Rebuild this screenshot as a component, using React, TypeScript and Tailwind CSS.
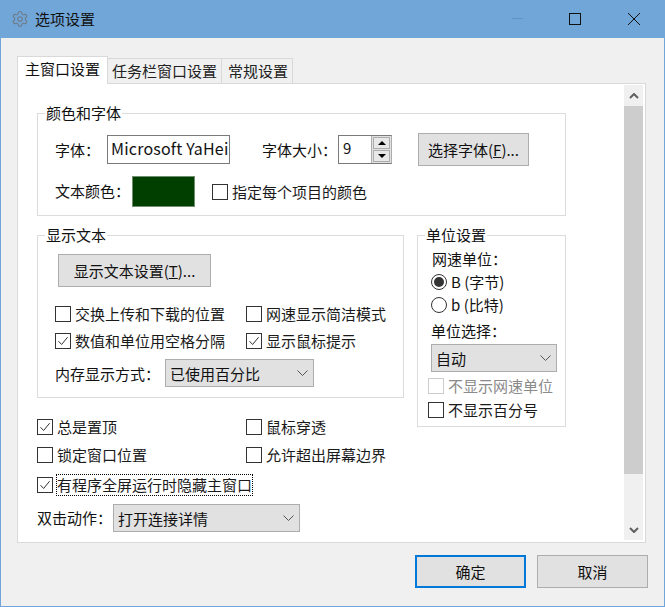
import React from 'react';
import { Settings } from 'lucide-react';

const FONT = 'font-["Noto_Sans_CJK_SC","Noto_Sans",sans-serif]';

function Check({ label, checked, disabled, focus, className = '' }: { label: string; checked?: boolean; disabled?: boolean; focus?: boolean; className?: string }) {
  return (
    <div className={`flex items-center h-[20px] ${className}`}>
      <span className={`w-[16px] h-[16px] shrink-0 border bg-white flex items-center justify-center ${disabled ? 'border-[#cccccc]' : 'border-[#333333]'}`}>
        {checked && (
          <svg width="12" height="12" viewBox="0 0 12 12" fill="none">
            <path d="M1.5 6.2 4.6 9.5 10.6 2.2" stroke="#333333" strokeWidth="1" />
          </svg>
        )}
      </span>
      <span className={`ml-[4px] text-[15px] leading-[20px] whitespace-nowrap ${disabled ? 'text-[#8a8a8a]' : 'text-[#1a1a1a]'} ${focus ? 'outline-1 outline-dotted outline-black' : ''}`}>{label}</span>
    </div>
  );
}

function Radio({ label, checked }: { label: string; checked?: boolean }) {
  return (
    <div className="flex items-center h-[23px]">
      <span className="w-[16px] h-[16px] rounded-full border border-[#333333] flex items-center justify-center">
        {checked && <span className="w-[10px] h-[10px] rounded-full bg-[#333333]" />}
      </span>
      <span className="ml-[4px] text-[15px] leading-[20px]">{label}</span>
    </div>
  );
}

function Combo({ value, className = '' }: { value: string; className?: string }) {
  return (
    <div className={`h-[28px] flex items-center justify-between pl-[4px] pr-[5px] bg-[#e1e1e1] border border-[#adadad] text-[15px] ${className}`}>
      <span className="pt-[2px]">{value}</span>
      <svg width="11" height="6" viewBox="0 0 11 6" fill="none"><path d="M.5.5l5 5 5-5" stroke="#555555" /></svg>
    </div>
  );
}

function Button({ children, className = '' }: { children: React.ReactNode; className?: string }) {
  return (
    <div className={`flex items-center justify-center pt-[2px] bg-[#e1e1e1] text-[15px] ${className}`}>
      {children}
    </div>
  );
}

function Group({ title, className = '', children }: { title: string; className?: string; children: React.ReactNode }) {
  return (
    <fieldset className={`border border-[#dcdcdc] min-w-0 ${className}`}>
      <legend className="ml-[7px] px-px text-[15px] leading-[20px]">{title}</legend>
      {children}
    </fieldset>
  );
}

export default function App() {
  return (
    <div className={`w-[665px] h-[607px] bg-[#f0f0f0] border border-t-0 border-[#70a6d8] text-[#111111] flex flex-col ${FONT}`}>
      {/* 标题栏 */}
      <div className="h-[38px] -mx-px bg-[#70a6d8] flex items-center shrink-0">
        <Settings size={18} strokeWidth={1.5} color="#6f7c8a" className="ml-[11px]" />
        <span className="ml-[6px] text-[15px]">选项设置</span>
        <div className="ml-auto flex items-center">
          <svg width="14" height="14" viewBox="0 0 14 14" className="mr-[43px]"><path d="M1 6.5h11" stroke="#5f94c4" /></svg>
          <svg width="14" height="14" viewBox="0 0 14 14" className="mr-[45px]"><rect x="1.5" y="1.5" width="11" height="11" fill="none" stroke="#111111" /></svg>
          <svg width="14" height="14" viewBox="0 0 14 14" className="mr-[24px]"><path d="M1 1 13 13M13 1 1 13" stroke="#111111" /></svg>
        </div>
      </div>

      {/* 标签页 */}
      <div className="mt-[18px] ml-[16px] flex items-end h-[27px] relative z-10 text-[15px]">
        <div className="h-[28px] -mb-px w-[91px] pb-[2px] bg-white border border-b-0 border-[#d9d9d9] flex items-center justify-center">主窗口设置</div>
        <div className="h-[25px] w-[114px] border border-l-0 border-b-0 border-[#d9d9d9] flex items-center justify-center text-[#222222]">任务栏窗口设置</div>
        <div className="h-[25px] w-[71px] pl-[2px] border border-l-0 border-b-0 border-[#d9d9d9] flex items-center justify-center text-[#222222]">常规设置</div>
      </div>

      {/* 面板 */}
      <div className="ml-[16px] w-[629px] h-[460px] bg-white border border-[#d9d9d9] flex p-[1px]">
        <div className="flex-1 pl-[18px] pt-[18px]">
          <Group title="颜色和字体" className="w-[529px] h-[113px]">
            <div className="flex items-center h-[29px] mt-[12px] ml-[17px]">
              <span className="w-[52px] pt-[2px] text-[15px]">字体：</span>
              <div className="w-[123px] h-[29px] border border-[#7a7a7a] flex items-center pl-[3px] pb-[4px] text-[16px] tracking-[0.2px]">Microsoft YaHei</div>
              <span className="ml-[32px] w-[76px] pt-[2px] text-[15px]">字体大小：</span>
              <div className="w-[54px] h-[29px] flex border border-[#7a7a7a] border-r-[#adadad]">
                <span className="w-[32px] pl-[4px] text-[15px] leading-[24px]">9</span>
                <div className="flex-1 flex flex-col justify-center gap-[1px] bg-[#e1e1e1] border-l border-[#adadad] px-px">
                  <div className="h-[12px] bg-[#e8e8e8] border border-[#adadad] flex items-center justify-center">
                    <span className="w-0 h-0 border-x-[4px] border-x-transparent border-b-[4px] border-b-black" />
                  </div>
                  <div className="h-[12px] bg-[#e8e8e8] border border-[#adadad] flex items-center justify-center">
                    <span className="w-0 h-0 border-x-[4px] border-x-transparent border-t-[4px] border-t-black" />
                  </div>
                </div>
              </div>
              <Button className="ml-[26px] w-[111px] h-[33px] border border-[#adadad]">选择字体(<u>F</u>)...</Button>
            </div>
            <div className="flex items-center h-[31px] mt-[12px] ml-[17px]">
              <span className="w-[77px] text-[15px]">文本颜色：</span>
              <div className="w-[63px] h-[31px] bg-[#003f00] border border-[#6f8f6f]" />
              <Check label="指定每个项目的颜色" className="ml-[17px]" />
            </div>
          </Group>

          <div className="flex mt-[9px]">
            <div className="w-[367px]">
              <Group title="显示文本" className="h-[173px]">
                <Button className="ml-[20px] mt-[9px] w-[153px] h-[33px] border border-[#adadad]">显示文本设置(<u>T</u>)...</Button>
                <div className="ml-[17px] mt-[17px] grid grid-cols-[191px_1fr] gap-y-[7px]">
                  <Check label="交换上传和下载的位置" />
                  <Check label="网速显示简洁模式" />
                  <Check label="数值和单位用空格分隔" checked />
                  <Check label="显示鼠标提示" checked />
                </div>
                <div className="ml-[17px] mt-[8px] flex items-center text-[15px]">
                  <span className="w-[110px] pt-[2px]">内存显示方式：</span>
                  <Combo value="已使用百分比" className="w-[149px]" />
                </div>
              </Group>
              <div className="mt-[19px] grid grid-cols-[209px_1fr] gap-y-[8px]">
                <Check label="总是置顶" checked />
                <Check label="鼠标穿透" />
                <Check label="锁定窗口位置" />
                <Check label="允许超出屏幕边界" />
              </div>
              <Check label="有程序全屏运行时隐藏主窗口" checked focus className="mt-[10px]" />
              <div className="mt-[9px] flex items-center text-[15px]">
                <span className="w-[76px]">双击动作：</span>
                <Combo value="打开连接详情" className="w-[187px]" />
              </div>
            </div>
            <div className="ml-[13px] w-[149px]">
              <Group title="单位设置" className="h-[202px]">
                <div className="pl-[10px]">
                  <div className="ml-[4px] mt-[4px] text-[15px] leading-[20px]">网速单位：</div>
                  <div className="ml-[3px] mt-[1px]">
                    <Radio label="B (字节)" checked />
                    <Radio label="b (比特)" />
                  </div>
                  <div className="ml-[3px] mt-[5px] text-[15px] leading-[20px]">单位选择：</div>
                  <Combo value="自动" className="ml-[3px] mt-[3px] w-[126px]" />
                  <Check label="不显示网速单位" disabled className="mt-[4px]" />
                  <Check label="不显示百分号" className="mt-[4px]" />
                </div>
              </Group>
            </div>
          </div>
        </div>

        {/* 滚动条 */}
        <div className="w-[19px] flex flex-col bg-[#f0f0f0] mr-px mb-px">
          <div className="h-[21px] flex items-center justify-center">
            <svg width="10" height="6" viewBox="0 0 10 6"><path d="M1 5 5 1l4 4" fill="none" stroke="#606060" strokeWidth="2" /></svg>
          </div>
          <div className="h-[368px] bg-[#cdcdcd]" />
          <div className="mt-auto h-[21px] flex items-center justify-center">
            <svg width="10" height="6" viewBox="0 0 10 6"><path d="M1 1l4 4 4-4" fill="none" stroke="#606060" strokeWidth="2" /></svg>
          </div>
        </div>
      </div>

      {/* 底部按钮 */}
      <div className="mt-[12px] flex justify-end gap-[11px] pr-[16px]">
        <Button className="w-[111px] h-[33px] border-2 border-[#0078d7]">确定</Button>
        <Button className="w-[111px] h-[33px] border border-[#adadad]">取消</Button>
      </div>
    </div>
  );
}
